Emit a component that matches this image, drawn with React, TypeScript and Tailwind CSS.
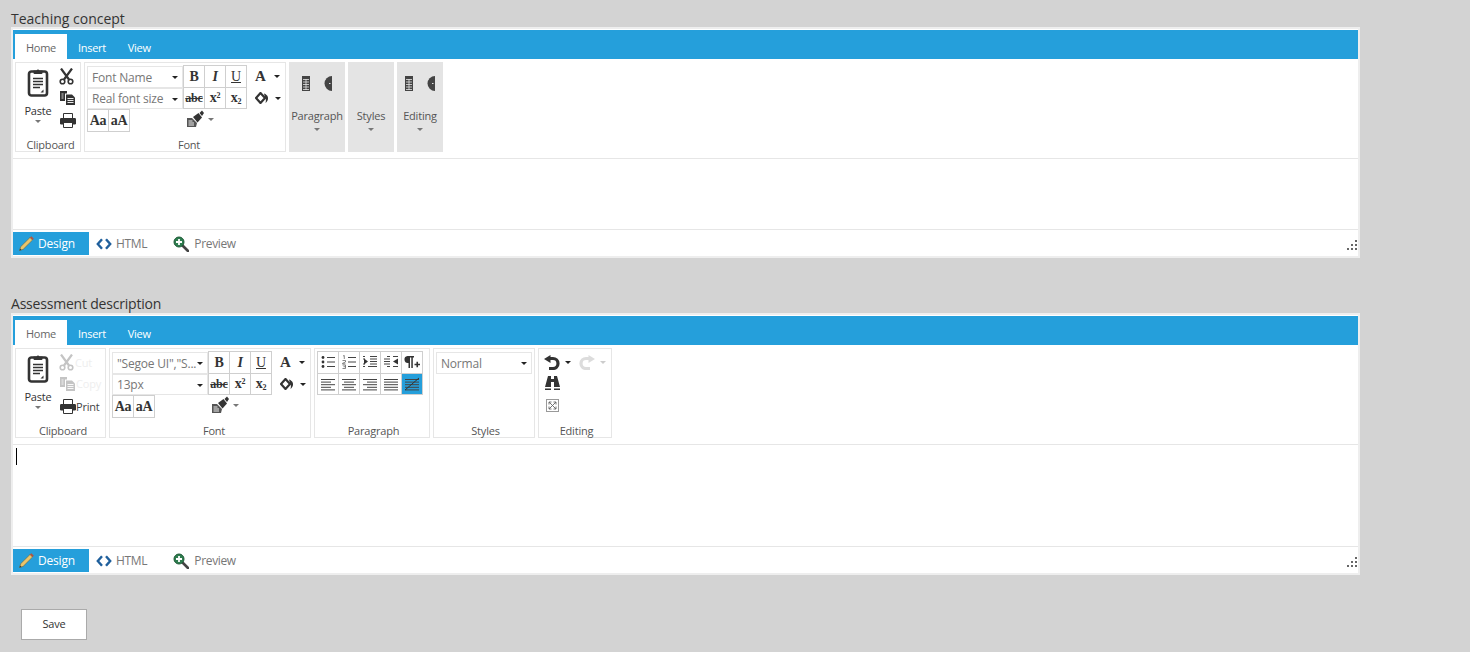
import React from 'react';

const caretDark = 'border-x-[3px] border-t-[3px] border-x-transparent border-t-[#222]';
const caretGray = 'border-x-[3px] border-t-[3px] border-x-transparent border-t-[#777]';
const caretLight = 'border-x-[3px] border-t-[3px] border-x-transparent border-t-[#ccc]';

const Caret = ({ className = caretDark }: { className?: string }) => <span className={`inline-block w-0 h-0 ${className}`} />;

const ClipboardIcon = () => (
  <svg width="22" height="29" viewBox="0 0 22 29">
    <rect x="2" y="3.500" width="18" height="24" rx="2.500" fill="none" stroke="#333" strokeWidth="2.600" />
    <path d="M6.500 4V2.500h3a1.700 1.700 0 0 1 3 0h3V5a1 1 0 0 1-1 1h-7a1 1 0 0 1-1-1z" fill="#333" />
    <path d="M6 10.500h10M6 13.500h10M6 16.500h10M6 19.500h7" stroke="#333" strokeWidth="1.300" />
    <path d="M13.500 24.500l3-3v3z" fill="#333" />
  </svg>
);

const ScissorsIcon = ({ color = '#333' }: { color?: string }) => (
  <svg width="15" height="17" viewBox="0 0 15 17">
    <path d="M2 0.500L10 11.500M13 0.500L5 11.500" stroke={color} strokeWidth="2.200" fill="none" />
    <circle cx="3.500" cy="13.500" r="2.300" fill="none" stroke={color} strokeWidth="1.600" />
    <circle cx="11.500" cy="13.500" r="2.300" fill="none" stroke={color} strokeWidth="1.600" />
  </svg>
);

const CopyIcon = ({ color = '#333' }: { color?: string }) => (
  <svg width="16" height="14" viewBox="0 0 16 14">
    <path d="M0 0h7v2.500H5V10H0z" fill={color} />
    <path d="M1.500 3h2M1.500 5h2M1.500 7h2" stroke="#fff" strokeWidth=".8" />
    <path d="M6 3.500h6l3 3V14H6z" fill={color} />
    <path d="M7.500 7.500h6M7.500 9.500h6M7.500 11.500h6" stroke="#fff" strokeWidth=".9" />
  </svg>
);

const PrintIcon = () => (
  <svg width="16" height="15" viewBox="0 0 16 15">
    <path d="M3.500 5V.5h9V5" fill="none" stroke="#333" strokeWidth="1" />
    <rect x="0" y="5" width="16" height="6.500" rx="1.200" fill="#333" />
    <path d="M3.500 10v4.500h9V10" fill="#fff" stroke="#333" strokeWidth="1" />
  </svg>
);

const HighlighterIcon = () => (
  <svg width="18" height="18" viewBox="0 0 18 18">
    <path d="M6 7l5.500-4 3.500 4.500-4.500 5z" fill="#333" />
    <path d="M12.500 3L15 .5l2 2.500-2 3z" fill="#333" />
    <path d="M0 8h5l5 5-1 4H0z" fill="#555" />
    <path d="M1.500 11h4M1.500 13h5.500M1.500 15h5.500" stroke="#fff" strokeWidth=".9" />
  </svg>
);

const FillIcon = () => (
  <svg width="14" height="12" viewBox="0 0 14 12">
    <path d="M5.500 1L1 6l4.500 5L10 6z" fill="none" stroke="#333" strokeWidth="2.200" />
    <path d="M9 1.500c2.500.8 4.500 3 4 5.500-.3 1.600-1.300 3-2.500 4 .5-2 .8-4-.5-5.500z" fill="#333" />
  </svg>
);

const TableIcon = () => (
  <svg width="8" height="15" viewBox="0 0 8 15">
    <path d="M0 0h8v15H0z" fill="#444" />
    <path d="M1 3.500h6M1 6h6M1 8.500h6M1 11h6M1 13.500h6" stroke="#e4e4e4" strokeWidth=".8" />
    <path d="M4 3v11" stroke="#e4e4e4" strokeWidth=".8" />
  </svg>
);

const HalfMoonIcon = () => (
  <svg width="8" height="15" viewBox="0 0 8 15">
    <path d="M8 0v15A7.500 7.500 0 0 1 8 0z" fill="#444" />
    <rect x="5" y="7" width="1.500" height="1" fill="#e4e4e4" />
  </svg>
);

const PencilIcon = () => (
  <svg width="15" height="15" viewBox="0 0 15 15">
    <path d="M0.500 14.500l1.200-3.800L11 1.500l2.500 2.500-9.300 9.300z" fill="#e9c46a" stroke="#6b5a2c" strokeWidth=".5" />
    <path d="M11 1.500l1.300-1.300 2.500 2.500L13.500 4z" fill="#b5533c" />
    <path d="M0.500 14.500l.6-2 1.400 1.400z" fill="#333" />
  </svg>
);

const CodeIcon = () => (
  <svg width="16" height="12" viewBox="0 0 16 12">
    <path d="M6 1.200L1.800 6 6 10.800M10 1.200L14.200 6 10 10.800" fill="none" stroke="#1f5f9c" strokeWidth="2.400" />
  </svg>
);

const PreviewIcon = () => (
  <svg width="16" height="16" viewBox="0 0 16 16">
    <path d="M9 9l6 6" stroke="#444" strokeWidth="2.600" strokeLinecap="round" />
    <circle cx="6" cy="6" r="5" fill="#2e7d4f" stroke="#1d5a36" strokeWidth="1" />
    <path d="M6 3v6M3 6h6" stroke="#fff" strokeWidth="1.800" />
  </svg>
);

const lines = (rows: [number, number][], base = 2.500, step = 2.600) =>
  rows.map(([a, b], i) => `M${a} ${base + i * step}H${b}`).join('');

const Lines = ({ d, color = '#444', extra }: { d: string; color?: string; extra?: React.ReactNode }) => (
  <svg width="15" height="14" viewBox="0 0 15 14">
    <path d={d} stroke={color} strokeWidth="1" fill="none" />
    {extra}
  </svg>
);

const BulletList = () => (
  <Lines
    d="M6 2.500h8M6 7h8M6 11.500h8"
    extra={
      <>
        <circle cx="2" cy="2.500" r="1.400" fill="#333" />
        <circle cx="2" cy="7" r="1.400" fill="#333" />
        <circle cx="2" cy="11.500" r="1.400" fill="#333" />
      </>
    }
  />
);

const NumberList = () => (
  <svg width="15" height="14" viewBox="0 0 15 14">
    <path d="M6 2.500h8M6 7h8M6 11.500h8" stroke="#444" strokeWidth="1" fill="none" />
    <path d="M1 1l1.300-.5v3.500M.5 5.500h3V7l-3 1.300v.5h3M.5 10h3v3.500h-3M1.500 11.700h2" stroke="#555" strokeWidth=".7" fill="none" />
  </svg>
);

const OutdentIcon = () => (
  <Lines
    d="M0 1.500h2M7 1.500h7M0 4h2M7 4h7M7 6.500h7M7 9h7M0 9h2M0 11.500h2M5 11.500h9"
    extra={<path d="M1 3.500v6l4-3z" fill="#333" />}
  />
);

const IndentIcon = () => (
  <Lines
    d="M3 1.500h3M9 1.500h5M0 4h6M0 6.500h6M0 9h6M3 11.500h3M9 11.500h5"
    extra={<path d="M14 3.500v6l-5-3z" fill="#333" />}
  />
);

const ParaIcon = () => (
  <svg width="16" height="14" viewBox="0 0 16 14">
    <path d="M3.500 1H10v1.500H8.800V13H7.300V2.500H6V13H4.500V8A3.500 3.500 0 0 1 3.500 1z" fill="#333" />
    <path d="M10.500 9.500h5.500M13.250 6.800v5.400" stroke="#333" strokeWidth="1.600" />
  </svg>
);

const AlignLeft = () => <Lines d={lines([[0, 14], [0, 10], [0, 14], [0, 10], [0, 14]])} />;
const AlignCenter = () => <Lines d={lines([[0, 14], [2, 12], [0, 14], [2, 12], [0, 14]])} />;
const AlignRight = () => <Lines d={lines([[0, 14], [4, 14], [0, 14], [4, 14], [0, 14]])} />;
const AlignJustify = () => <Lines d={lines([[0, 14], [0, 14], [0, 14], [0, 14], [0, 14]])} />;
const AlignNone = () => (
  <Lines d={lines([[0, 14], [0, 14], [0, 14], [0, 14], [0, 14]])} extra={<path d="M0 13L14 1" stroke="#333" strokeWidth="1" />} />
);

const UndoIcon = ({ color = '#333', flip = false }: { color?: string; flip?: boolean }) => (
  <svg width="17" height="15" viewBox="0 0 17 15" className={flip ? '-scale-x-100' : ''}>
    <path d="M4 3.500h5a4.900 4.900 0 0 1 0 10H5" fill="none" stroke={color} strokeWidth="3.200" />
    <path d="M6.500 0v8L0 4z" fill={color} />
  </svg>
);

const BinocularsIcon = () => (
  <svg width="15" height="14" viewBox="0 0 15 14">
    <path d="M3 0h3v3h3V0h3l3 11H9V6H6v5H0z" fill="#333" />
    <rect x="0" y="12.500" width="6" height="1.500" fill="#333" />
    <rect x="9" y="12.500" width="6" height="1.500" fill="#333" />
  </svg>
);

const SelectAllIcon = () => (
  <svg width="13" height="13" viewBox="0 0 13 13">
    <rect x=".5" y=".5" width="12" height="12" fill="none" stroke="#333" strokeDasharray="1 1" />
    <path d="M3 3l7 7M10 3l-7 7M3 3h2.500M3 3v2.500M10 3H7.500M10 3v2.500M3 10h2.500M3 10V7.500M10 10H7.500M10 10V7.500" stroke="#666" strokeWidth=".9" fill="none" />
  </svg>
);

const Cell = ({ children, active = false }: { children: React.ReactNode; active?: boolean }) => (
  <div className={`flex items-center justify-center w-[21px] h-[21.5px] border-r border-b border-[#cfcfcf] ${active ? 'bg-[#259fdb]' : ''}`}>
    {children}
  </div>
);

const Combo = ({ value }: { value: string }) => (
  <div className="flex items-center justify-between h-[21.5px] w-[96px] border border-[#e6e6e6] pl-[4px] pr-[4px] pt-[2px] text-[12px] text-[#777] whitespace-nowrap">
    <span>{value}</span>
    <Caret />
  </div>
);

const Group = ({ label, w, labelPad = 'pl-[3px]', children }: { label: string; w: string; labelPad?: string; children: React.ReactNode }) => (
  <div className={`flex flex-col h-[90px] border border-[#e6e6e6] ${w}`}>
    <div className="flex-1 min-h-0">{children}</div>
    <div className={`h-[15px] mb-[-1px] text-center text-[11px] leading-[15px] text-[#555] ${labelPad}`}>{label}</div>
  </div>
);

const CollapsedGroup = ({ label, w, icons = true }: { label: string; w: string; icons?: boolean }) => (
  <div className={`flex flex-col items-center h-[90px] bg-[#e4e4e4] ${w}`}>
    <div className="flex items-center h-[15px] mt-[14px] gap-[14px]">
      {icons && (
        <>
          <TableIcon />
          <HalfMoonIcon />
        </>
      )}
    </div>
    <div className="mt-[17px] text-[11px] leading-[15px] text-[#555]">{label}</div>
    <div className="mt-[5px] flex"><Caret className={caretGray} /></div>
  </div>
);

const FontGroup = ({ font, size }: { font: string; size: string }) => (
  <Group label="Font" w="w-[202px]" labelPad="pl-[8px]">
    <div className="flex pl-[2px] pt-[2px]">
      <div className="flex flex-col pt-[1px]">
        <Combo value={font} />
        <Combo value={size} />
      </div>
      <div className="grid grid-cols-3 w-[64px] h-[44px] border-t border-l border-[#cfcfcf]">
        <Cell><span className="font-['Liberation_Serif',serif] font-bold text-[14px] text-[#333]">B</span></Cell>
        <Cell><span className="font-['Liberation_Serif',serif] font-bold italic text-[14px] text-[#333]">I</span></Cell>
        <Cell><span className="font-['Liberation_Serif',serif] underline text-[14px] text-[#333]">U</span></Cell>
        <Cell><span className="font-['Liberation_Serif',serif] font-bold line-through text-[12px] text-[#333]">abc</span></Cell>
        <Cell><span className="font-['Liberation_Serif',serif] font-bold text-[14px] text-[#333]">x<sup className="text-[8px]">2</sup></span></Cell>
        <Cell><span className="font-['Liberation_Serif',serif] font-bold text-[14px] text-[#333]">x<sub className="text-[8px]">2</sub></span></Cell>
      </div>
      <div className="flex flex-col pl-[8px]">
        <div className="flex items-center h-[22px] gap-[8px]">
          <span className="font-['Liberation_Serif',serif] font-bold text-[15px] text-[#333]">A</span>
          <Caret />
        </div>
        <div className="flex items-center h-[22px] gap-[6px]">
          <FillIcon />
          <Caret />
        </div>
      </div>
    </div>
    <div className="flex items-start pl-[2px]">
      <div className="flex border-l border-t border-[#cfcfcf]">
        <Cell><span className="font-['Liberation_Serif',serif] font-bold text-[14px] text-[#333]">Aa</span></Cell>
        <Cell><span className="font-['Liberation_Serif',serif] font-bold text-[14px] text-[#333]">aA</span></Cell>
      </div>
      <div className="flex items-center gap-[3px] ml-[57px] pt-[1px]">
        <HighlighterIcon />
        <Caret className={caretGray} />
      </div>
    </div>
  </Group>
);

const Footer = () => (
  <div className="flex items-start h-[27px] pt-[2px] border-t border-[#e6e6e6] bg-white">
    <div className="flex items-center gap-[4px] w-[76px] h-[23px] pl-[6px] bg-[#259fdb] text-[12px] text-white">
      <PencilIcon />
      <span>Design</span>
    </div>
    <div className="flex items-center gap-[4px] h-[23px] ml-[7px] text-[12px] tracking-[-0.3px] text-[#777]">
      <CodeIcon />
      <span>HTML</span>
    </div>
    <div className="flex items-center gap-[5px] h-[23px] ml-[26px] text-[12px] tracking-[-0.35px] text-[#777]">
      <PreviewIcon />
      <span>Preview</span>
    </div>
    <svg width="10" height="10" viewBox="0 0 10 10" className="ml-auto mr-[1px] mt-[8px]">
      <path d="M8 0h2v2H8zM4 4h2v2H4zM8 4h2v2H8zM0 8h2v2H0zM4 8h2v2H4zM8 8h2v2H8z" fill="#666" />
    </svg>
  </div>
);

const Editor = ({ ribbon, contentClass, children }: { ribbon: React.ReactNode; contentClass: string; children?: React.ReactNode }) => (
  <div className="w-[1349px] border-2 border-[#eeeeee] bg-white">
    <div className="flex items-end h-[29px] mt-[1px] pl-[2px] bg-[#259fdb] text-[11px] tracking-[-0.3px] text-white">
      <div className="flex items-center justify-center w-[52px] h-[25px] pt-[3px] bg-white text-[#666]">Home</div>
      <div className="flex items-center h-[25px] pt-[3px] ml-[11px]">Insert</div>
      <div className="flex items-center h-[25px] pt-[3px] ml-[22px]">View</div>
    </div>
    <div className="flex h-[100px] pt-[3px] pl-[2px] gap-[3px] border-b border-[#e6e6e6]">{ribbon}</div>
    <div className={contentClass}>{children}</div>
    <Footer />
  </div>
);

const App = () => (
  <div className="w-[1470px] h-[652px] bg-[#d3d3d3] pl-[11px] font-['Open_Sans',sans-serif] tracking-[-0.2px] overflow-hidden">
    <div className="h-[27px] pt-[9px] text-[14px] leading-[19px] tracking-normal text-[#333]">Teaching concept</div>
    <Editor
      contentClass="h-[70px]"
      ribbon={
        <>
          <Group label="Clipboard" w="w-[66px]" labelPad="pl-[5px]">
            <div className="flex pt-[4px]">
              <div className="flex flex-col items-center w-[43px] pl-[1px] pt-[1px]">
                <ClipboardIcon />
                <span className="mt-[6px] text-[11px] leading-[15px] text-[#333]">Paste</span>
                <span className="flex mt-[2px]"><Caret className={caretGray} /></span>
              </div>
              <div className="flex flex-col items-start gap-[6px] pt-[1px]">
                <ScissorsIcon />
                <div className="flex ml-[1px]"><CopyIcon /></div>
                <div className="flex ml-[1px] mt-[2px]"><PrintIcon /></div>
              </div>
            </div>
          </Group>
          <FontGroup font="Font Name" size="Real font size" />
          <CollapsedGroup label="Paragraph" w="w-[56px]" />
          <CollapsedGroup label="Styles" w="w-[46px]" icons={false} />
          <CollapsedGroup label="Editing" w="w-[46px]" />
        </>
      }
    />
    <div className="h-[55px] pt-[36px] text-[14px] leading-[19px] text-[#333]">Assessment description</div>
    <Editor
      contentClass="h-[101px] pt-[3px]"
      ribbon={
        <>
          <Group label="Clipboard" w="w-[91px]" labelPad="pl-[5px]">
            <div className="flex pt-[4px]">
              <div className="flex flex-col items-center w-[43px] pl-[1px] pt-[1px]">
                <ClipboardIcon />
                <span className="mt-[6px] text-[11px] leading-[15px] text-[#333]">Paste</span>
                <span className="flex mt-[2px]"><Caret className={caretGray} /></span>
              </div>
              <div className="flex flex-col items-start gap-[6px] pt-[1px] text-[11px] leading-[14px]">
                <div className="flex items-center gap-[1px] text-[#eeeeee]"><ScissorsIcon color="#c4c4c4" /><span>Cut</span></div>
                <div className="flex items-center ml-[1px] text-[#eeeeee]"><CopyIcon color="#c4c4c4" /><span>Copy</span></div>
                <div className="flex items-center ml-[1px] mt-[2px] text-[#444]"><PrintIcon /><span>Print</span></div>
              </div>
            </div>
          </Group>
          <FontGroup font={'"Segoe UI","S...'} size="13px" />
          <Group label="Paragraph" w="w-[116px]">
            <div className="pl-[2px] pt-[2px]">
              <div className="grid grid-cols-5 w-[106px] border-t border-l border-[#cfcfcf]">
                <Cell><BulletList /></Cell>
                <Cell><NumberList /></Cell>
                <Cell><OutdentIcon /></Cell>
                <Cell><IndentIcon /></Cell>
                <Cell><ParaIcon /></Cell>
                <Cell><AlignLeft /></Cell>
                <Cell><AlignCenter /></Cell>
                <Cell><AlignRight /></Cell>
                <Cell><AlignJustify /></Cell>
                <Cell active><AlignNone /></Cell>
              </div>
            </div>
          </Group>
          <Group label="Styles" w="w-[102px]">
            <div className="pl-[2px] pt-[3px]">
              <Combo value="Normal" />
            </div>
          </Group>
          <Group label="Editing" w="w-[74px]">
            <div className="flex flex-col items-start pl-[5px] pt-[5px]">
              <div className="flex items-center h-[16px]">
                <UndoIcon />
                <span className="flex ml-[4px]"><Caret /></span>
                <span className="flex ml-[7px]"><UndoIcon color="#dcdcdc" flip /></span>
                <span className="flex ml-[5px]"><Caret className={caretLight} /></span>
              </div>
              <div className="mt-[6px] ml-[1px] flex"><BinocularsIcon /></div>
              <div className="mt-[9px] ml-[2px] flex"><SelectAllIcon /></div>
            </div>
          </Group>
        </>
      }
    >
      <div className="w-px h-[17px] ml-[3px] bg-black" />
    </Editor>
    <button className="block w-[66px] h-[31px] mt-[34px] ml-[10px] bg-white border border-[#aaa] text-[11px] text-[#333]">Save</button>
  </div>
);

export default App;
